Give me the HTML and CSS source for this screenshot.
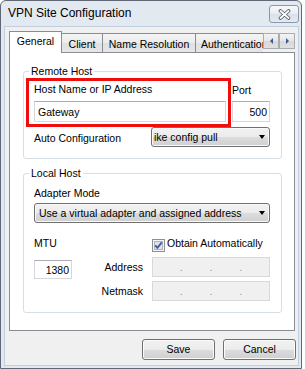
FILE: index.html
```html
<!DOCTYPE html>
<html lang="en">
<head>
    <meta charset="UTF-8">
    <title>VPN Site Configuration</title>
    <link rel="stylesheet" href="styles.css">
</head>
<body>
    <div class="window">
        <div class="titlebar">
            <span class="title">VPN Site Configuration</span>
            <button class="close" type="button" aria-label="Close">
                <svg width="13" height="11" viewBox="0 0 13 11">
                    <path d="M2.5 2 L10.5 9 M10.5 2 L2.5 9" stroke="#55606c" stroke-width="3.6" stroke-linecap="round"/>
                    <path d="M2.5 2 L10.5 9 M10.5 2 L2.5 9" stroke="#ffffff" stroke-width="1.8" stroke-linecap="round"/>
                </svg>
            </button>
        </div>

        <div class="client">
            <div class="tabs">
                <div class="tab active">General</div>
                <div class="tab tab-client">Client</div>
                <div class="tab tab-names">Name Resolution</div>
                <div class="tab tab-auth">Authentication</div>
                <div class="tab-scroll"><span class="arrow arrow-left"></span></div>
                <div class="tab-scroll"><span class="arrow arrow-right"></span></div>
            </div>

            <div class="panel">
                <fieldset class="group">
                    <legend>Remote Host</legend>
                    <div class="host-grid">
                        <label for="host">Host Name or IP Address</label>
                        <label for="port" class="port-label">Port</label>
                        <input type="text" id="host" class="text" value="Gateway">
                        <input type="text" id="port" class="text num" value="500">
                    </div>
                    <div class="config-row">
                        <label class="row-label">Auto Configuration</label>
                        <div class="combo combo-short">
                            <span>ike config pull</span>
                            <span class="combo-arrow"></span>
                        </div>
                    </div>
                </fieldset>

                <fieldset class="group">
                    <legend>Local Host</legend>
                    <label class="field-label">Adapter Mode</label>
                    <div class="combo combo-wide">
                        <span>Use a virtual adapter and assigned address</span>
                        <span class="combo-arrow"></span>
                    </div>
                    <div class="ip-grid">
                        <label class="mtu-label">MTU</label>
                        <div class="check-row">
                            <svg width="13" height="13" viewBox="0 0 13 13">
                                <rect x="0.5" y="0.5" width="12" height="12" fill="#f6f6f6" stroke="#8e8f8f"/>
                                <rect x="2.5" y="2.5" width="8" height="8" fill="#dfe3ea" stroke="#aeb4be"/>
                                <path d="M3.2 6.3 L5.4 8.8 L9.8 3.4" fill="none" stroke="#4460a2" stroke-width="2"/>
                            </svg>
                            <span>Obtain Automatically</span>
                        </div>
                        <input type="text" class="text num mtu" value="1380">
                        <label class="ip-label">Address</label>
                        <div class="ip">
                            <span class="seg"></span><span>.</span><span class="seg"></span><span>.</span><span class="seg"></span><span>.</span><span class="seg"></span>
                        </div>
                        <label class="ip-label netmask-label">Netmask</label>
                        <div class="ip netmask">
                            <span class="seg"></span><span>.</span><span class="seg"></span><span>.</span><span class="seg"></span><span>.</span><span class="seg"></span>
                        </div>
                    </div>
                </fieldset>
            </div>

            <div class="buttons">
                <button type="button">Save</button>
                <button type="button">Cancel</button>
            </div>
        </div>

        <div class="highlight"></div>
    </div>
</body>
</html>
```

FILE: styles.css
```css
body {
    margin: 0;
    background: #ffffff;
    font-family: "Liberation Sans", Arial, sans-serif;
    font-size: 10.5px;
    line-height: 13px;
    color: #000000;
}
.window {
    position: relative;
    box-sizing: border-box;
    width: 302px;
    height: 369px;
    border: 1px solid #5f6874;
    border-radius: 6px 6px 0 0;
    background: #e3e9f1;
    padding: 0 2px 2px 3px;
    display: flex;
    flex-direction: column;
}
.titlebar {
    height: 25px;
    flex-shrink: 0;
    display: flex;
    justify-content: space-between;
    align-items: flex-start;
}
.title {
    font-size: 12px;
    line-height: 14px;
    margin: 5px 0 0 4px;
}
.close {
    box-sizing: border-box;
    width: 30px;
    height: 18px;
    margin-top: 4px;
    padding: 0;
    border: 1px solid #8d98a7;
    border-radius: 3px;
    background: linear-gradient(#f6f8fb, #e8ecf2 50%, #dae1ea 50%, #e4e9ef);
    display: flex;
    align-items: center;
    justify-content: center;
}
.client {
    flex: 1;
    border: 1px solid #c0cedd;
    background: #f0f0f0;
    padding: 4px 3px 0 4px;
    display: flex;
    flex-direction: column;
}

/* tabs */
.tabs {
    height: 21px;
    flex-shrink: 0;
    display: flex;
    align-items: flex-end;
    position: relative;
    z-index: 1;
}
.tab {
    box-sizing: border-box;
    height: 19px;
    margin-left: -1px;
    padding-top: 4px;
    border: 1px solid #898c95;
    border-bottom: none;
    background: linear-gradient(#f4f4f4, #ececec 50%, #e0e0e0 50%, #e6e6e6);
    text-align: center;
    white-space: nowrap;
}
.tab.active {
    width: 53px;
    height: 22px;
    margin-left: 0;
    margin-bottom: -1px;
    padding-top: 3px;
    background: #ffffff;
}
.tab-client {
    width: 42px;
}
.tab-names {
    width: 94px;
}
.tab-auth {
    width: 68px;
    padding-left: 5px;
    text-align: left;
    overflow: hidden;
    border-right: none;
}
.tab-scroll {
    box-sizing: border-box;
    width: 16px;
    height: 16px;
    align-self: flex-start;
    margin-top: 2px;
    border: 1px solid #a9acb2;
    background: linear-gradient(#f4f4f4, #e6e6e6 50%, #d8d8d8 50%, #e0e0e0);
    display: flex;
    align-items: center;
    justify-content: center;
}
.arrow {
    width: 0;
    height: 0;
    border-top: 3px solid transparent;
    border-bottom: 3px solid transparent;
}
.arrow-left {
    border-right: 3px solid #3f5b8a;
}
.arrow-right {
    border-left: 3px solid #3f5b8a;
}

/* tab page */
.panel {
    box-sizing: border-box;
    border: 1px solid #898c95;
    background: #ffffff;
    padding: 12px 12px 17px 13px;
}
.group {
    margin: 0;
    min-width: 0;
    border: 1px solid #d5dfe5;
    border-radius: 3px;
    padding: 0 11px 11px 10px;
}
.group + .group {
    margin-top: 8px;
}
.group legend {
    margin-left: -5px;
    padding: 0 2px;
    line-height: 12px;
}
.host-grid {
    display: grid;
    grid-template-columns: 1fr 38px;
    column-gap: 6px;
    margin-top: 6px;
}
.port-label {
    margin-top: 1px;
}
.text {
    box-sizing: border-box;
    width: 100%;
    height: 21px;
    margin: 4px 0 0;
    padding: 0 3px;
    border: 1px solid #d4d7dd;
    border-top-color: #abadb3;
    background: #ffffff;
    font: inherit;
    color: #000000;
}
.text.num {
    text-align: right;
    padding-right: 2px;
}
.config-row {
    display: flex;
    justify-content: space-between;
    align-items: flex-start;
    margin-top: 5px;
}
.row-label {
    margin-top: 5px;
}
.combo {
    box-sizing: border-box;
    height: 20px;
    border: 1px solid #707070;
    border-radius: 3px;
    background: linear-gradient(#f2f2f2, #ebebeb 50%, #dddddd 50%, #cfcfcf);
    box-shadow: inset 0 0 0 1px #fafafa;
    display: flex;
    align-items: center;
    justify-content: space-between;
    padding: 0 4px 0 2px;
    white-space: nowrap;
}
.combo-short {
    width: 119px;
}
.combo-wide {
    margin-top: 3px;
    padding-left: 4px;
}
.combo-arrow {
    width: 0;
    height: 0;
    border-left: 3.5px solid transparent;
    border-right: 3.5px solid transparent;
    border-top: 4px solid #000000;
}
.field-label {
    display: block;
    margin-top: 8px;
}
.ip-grid {
    display: grid;
    grid-template-columns: 38px 80px 118px;
    grid-template-rows: 16px 20px 20px;
    row-gap: 4px;
    margin-top: 14px;
}
.mtu-label {
    grid-column: 1 / 3;
}
.check-row {
    display: flex;
    align-items: flex-start;
    gap: 2px;
    white-space: nowrap;
}
.check-row svg {
    margin-top: 2px;
    flex-shrink: 0;
}
.text.mtu {
    height: 19px;
    margin-top: 3px;
}
.ip-label {
    align-self: center;
    text-align: right;
    padding-right: 9px;
}
.netmask-label {
    grid-column: 2;
}
.netmask {
    grid-column: 3;
}
.ip {
    box-sizing: border-box;
    height: 20px;
    border: 1px solid #d9d9d9;
    background: #f0f0f0;
    color: #9a9a9a;
    display: flex;
    align-items: center;
}
.seg {
    flex: 1;
}

/* dialog buttons */
.buttons {
    display: flex;
    justify-content: flex-end;
    gap: 8px;
    margin: 8px -1px 0 0;
}
.buttons button {
    box-sizing: border-box;
    width: 73px;
    height: 21px;
    padding: 0;
    border: 1px solid #707070;
    border-radius: 3px;
    background: linear-gradient(#f2f2f2, #ebebeb 50%, #dddddd 50%, #cfcfcf);
    box-shadow: inset 0 0 0 1px #fafafa;
    font: inherit;
    color: #000000;
}

/* annotation drawn over the screenshot */
.highlight {
    position: absolute;
    left: 25px;
    top: 77px;
    box-sizing: border-box;
    width: 205px;
    height: 49px;
    border: 3px solid #f20d0d;
}
```
